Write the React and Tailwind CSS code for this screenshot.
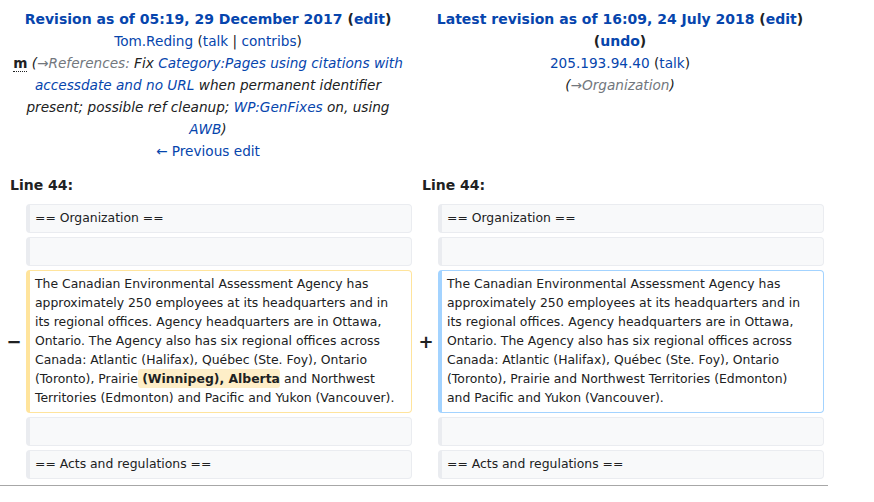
const link = "text-[#0645ad]";

function Box({ kind = "context", children }) {
  const styles = {
    context: "bg-[#f8f9fa] border-[#eaecf0]",
    deleted: "bg-white border-[#ffe49c]",
    added: "bg-white border-[#a3d3ff]",
  };
  return (
    <div
      className={`rounded-[4px] border border-l-4 pt-[3px] pb-[5px] pl-[5px] pr-[10px] text-[12.4px] leading-[19px] text-[#202122] min-h-[29px] ${styles[kind]}`}
    >
      {children}
    </div>
  );
}

function Marker({ children }) {
  return (
    <div className="flex items-center justify-center pl-[2px] text-[18px] font-bold text-[#202122]">{children}</div>
  );
}

export default function App() {
  const para =
    "The Canadian Environmental Assessment Agency has approximately 250 employees at its headquarters and in its regional offices. Agency headquarters are in Ottawa, Ontario. The Agency also has six regional offices across Canada: Atlantic (Halifax), Québec (Ste. Foy), Ontario (Toronto), Prairie";

  return (
    <div className="w-[874px] h-[502px] bg-white font-['DejaVu_Sans',sans-serif] text-[#202122]">
      <div className="w-[828px] border-b border-[#a7a7a7] pb-[2px]">
        <div className="grid grid-cols-[18px_386px_18px_386px] gap-[4px] p-[4px]">
          {/* headers */}
          <div className="col-span-2 pt-[4px] pb-[3px] text-center text-[13.65px] leading-[22px]">
            <div className="font-bold text-[14px]">
              <span className={link}>Revision as of 05:19, 29 December 2017</span> (<span className={link}>edit</span>)
            </div>
            <div>
              <span className={link}>Tom.Reding</span> (<span className={link}>talk</span> | <span className={link}>contribs</span>)
            </div>
            <div className="px-[4px]">
              <abbr className="font-bold no-underline border-b border-dotted border-[#202122]">m</abbr>{" "}
              <span className="italic">
                (<span className="text-[#72777d]">→References: </span>Fix{" "}
                <span className={link}>Category:Pages using citations with accessdate and no URL</span> when permanent identifier present; possible ref cleanup;{" "}
                <span className={link}>WP:GenFixes</span> on, using <span className={link}>AWB</span>)
              </span>
            </div>
            <div className={link}>← Previous edit</div>
          </div>
          <div className="col-span-2 pt-[4px] pb-[3px] text-center text-[13.65px] leading-[22px]">
            <div className="font-bold text-[14px]">
              <span className={link}>Latest revision as of 16:09, 24 July 2018</span> (<span className={link}>edit</span>) (<span className={link}>undo</span>)
            </div>
            <div>
              <span className={link}>205.193.94.40</span> (<span className={link}>talk</span>)
            </div>
            <div className="italic">
              (<span className="text-[#72777d]">→Organization</span>)
            </div>
          </div>

          {/* line numbers */}
          <div className="col-span-2 pl-[6px] pt-[5px] pb-[4px] text-[14px] leading-[22px] font-bold">Line 44:</div>
          <div className="col-span-2 pl-[6px] pt-[5px] pb-[4px] text-[14px] leading-[22px] font-bold">Line 44:</div>

          {/* row 1 */}
          <div />
          <Box>== Organization ==</Box>
          <div />
          <Box>== Organization ==</Box>

          {/* row 2 */}
          <div />
          <Box />
          <div />
          <Box />

          {/* row 3 */}
          <Marker>−</Marker>
          <Box kind="deleted">
            {para}
            <span className="rounded-[3px] bg-[#feeec8] font-bold py-[2px]"> (Winnipeg), Alberta</span> and Northwest Territories (Edmonton) and Pacific and Yukon (Vancouver).
          </Box>
          <Marker>+</Marker>
          <Box kind="added">
            {para} and Northwest Territories (Edmonton) and Pacific and Yukon (Vancouver).
          </Box>

          {/* row 4 */}
          <div />
          <Box />
          <div />
          <Box />

          {/* row 5 */}
          <div />
          <Box>== Acts and regulations ==</Box>
          <div />
          <Box>== Acts and regulations ==</Box>
        </div>
      </div>
    </div>
  );
}
